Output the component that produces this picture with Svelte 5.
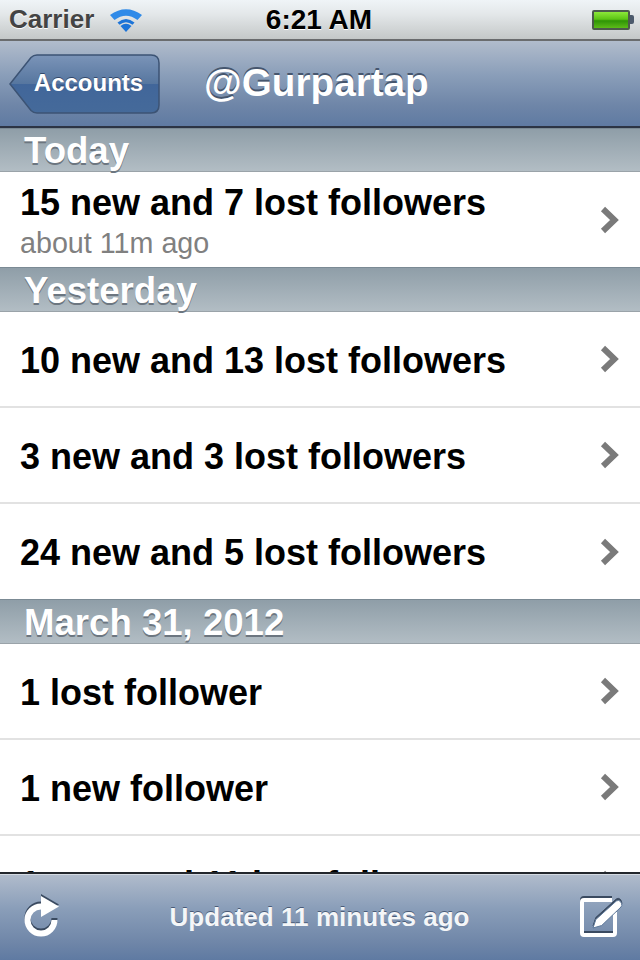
<script>
    const sections = [
        {
            title: "Today",
            rows: [{ text: "15 new and 7 lost followers", sub: "about 11m ago" }],
        },
        {
            title: "Yesterday",
            rows: [
                { text: "10 new and 13 lost followers" },
                { text: "3 new and 3 lost followers" },
                { text: "24 new and 5 lost followers" },
            ],
        },
        {
            title: "March 31, 2012",
            rows: [
                { text: "1 lost follower" },
                { text: "1 new follower" },
                { text: "1 new and 11 lost followers" },
            ],
        },
    ];
</script>

<div class="phone">
    <div class="status">
        <span class="carrier">Carrier</span>
        <svg class="wifi" width="34" height="26" viewBox="0 0 34 26">
            <path d="M17 25 L11.5 19 Q17 14.5 22.5 19 Z" fill="#1c74d8" />
            <path d="M8.5 15.5 Q17 8.5 25.5 15.5 L23.5 17.8 Q17 12.5 10.5 17.8 Z" fill="#1c74d8" />
            <path d="M1 8 Q17 -3.500 33 8 L28.500 13 Q17 4.500 5.500 13 Z" fill="#2f8ae8" />
        </svg>
        <span class="time">6:21 AM</span>
        <div class="battery">
            <div class="battery-fill"></div>
            <div class="battery-tip"></div>
        </div>
    </div>

    <div class="navbar">
        <div class="back">
            <svg class="back-shape" width="151" height="60" viewBox="0 0 151 60">
                <defs>
                    <linearGradient id="backGrad" x1="0" y1="0" x2="0" y2="1">
                        <stop offset="0" stop-color="#7b94b8" />
                        <stop offset="0.5" stop-color="#56769f" />
                        <stop offset="0.5" stop-color="#41669a" />
                        <stop offset="1" stop-color="#456a9a" />
                    </linearGradient>
                </defs>
                <path
                    d="M1 30 L22 3.5 Q24.5 1 28 1 L142 1 Q150 1 150 9 L150 51 Q150 59 142 59 L28 59 Q24.5 59 22 56.5 Z"
                    fill="url(#backGrad)"
                    stroke="#3c5374"
                    stroke-width="1.5"
                />
            </svg>
            <span class="back-label">Accounts</span>
        </div>
        <span class="nav-title">@Gurpartap</span>
    </div>

    <div class="list">
        {#each sections as section}
            <div class="section-head"><span>{section.title}</span></div>
            {#each section.rows as row, i}
                <div class="row" class:has-sub={row.sub} class:last={i === section.rows.length - 1}>
                    <div class="row-text">
                        <div class="row-title">{row.text}</div>
                        {#if row.sub}
                            <div class="row-sub">{row.sub}</div>
                        {/if}
                    </div>
                    <svg class="chevron" width="20" height="28" viewBox="0 0 20 28">
                        <path d="M3 3 L14.5 14 L3 25" fill="none" stroke="#7a7a7a" stroke-width="6" />
                    </svg>
                </div>
            {/each}
        {/each}
    </div>

    <div class="toolbar">
        <svg class="tool-icon" width="40" height="46" viewBox="0 0 40 46">
            <path d="M32.5 26 A13.5 13.5 0 1 1 19 12.5" fill="none" stroke="#fff" stroke-width="6" />
            <path d="M19 2 L37 12.5 L19 23 Z" fill="#fff" />
        </svg>
        <span class="updated">Updated 11 minutes ago</span>
        <svg class="tool-icon" width="44" height="44" viewBox="0 0 44 44">
            <path d="M32 5 H4 Q2 5 2 7 V38 Q2 40 4 40 H33 Q35 40 35 38 V17" fill="none" stroke="#fff" stroke-width="4" />
            <path d="M13 33 L15.800 24.500 L36.300 6 Q38.500 4.500 40.500 6.500 L41.500 8.500 Q42.500 10.500 41 12 L21.700 30.500 Z" fill="#fff" stroke="#5c7799" stroke-width="1" />
        </svg>
    </div>
</div>

<style>
    :global(body) {
        margin: 0;
        background: #fff;
    }

    .phone {
        width: 640px;
        height: 960px;
        display: flex;
        flex-direction: column;
        overflow: hidden;
        font-family: "Liberation Sans", Arial, sans-serif;
    }

    .status {
        height: 39px;
        flex: none;
        display: flex;
        align-items: center;
        padding: 0 6px 0 9px;
        position: relative;
        background: linear-gradient(#eff4f7, #e4e8ea 35%, #c4c8c8);
        border-bottom: 2px solid #6a6c6e;
    }

    .carrier {
        font-size: 26px;
        font-weight: bold;
        color: #444;
        text-shadow: 0 1px 0 #fff;
    }

    .wifi {
        margin-left: 15px;
    }

    .time {
        position: absolute;
        left: -2px;
        right: 0;
        text-align: center;
        font-size: 28px;
        font-weight: bold;
        color: #000;
        text-shadow: 0 1px 0 #fff;
    }

    .battery {
        margin-left: auto;
        display: flex;
        align-items: center;
    }

    .battery-fill {
        width: 34px;
        height: 16px;
        border: 2px solid #4c5a4c;
        border-radius: 2px;
        background: linear-gradient(#8ce83a, #5cc414 45%, #2f9406 55%, #5cbc18);
    }

    .battery-tip {
        width: 4px;
        height: 9px;
        background: #4c5a6c;
        border-radius: 0 2px 2px 0;
    }

    .navbar {
        height: 85px;
        flex: none;
        display: flex;
        align-items: center;
        padding-left: 9px;
        background: linear-gradient(#b1bccc, #8a9eb9 40%, #6f86a8 75%, #5f7aa2);
        border-bottom: 2px solid #2c3444;
    }

    .back {
        width: 151px;
        height: 60px;
        position: relative;
        display: flex;
        align-items: center;
        justify-content: center;
        flex: none;
    }

    .back-shape {
        position: absolute;
        left: 0;
        top: 0;
    }

    .back-label {
        position: relative;
        margin-left: 8px;
        margin-top: -2px;
        font-size: 24px;
        font-weight: bold;
        color: #fff;
        text-shadow: 0 -1px 0 #33486a;
    }

    .nav-title {
        margin-left: 44px;
        margin-top: -2px;
        font-size: 38.7px;
        font-weight: bold;
        color: #fff;
        text-shadow: 0 -2px 0 #46566e;
    }

    .list {
        flex: 1;
        min-height: 0;
        overflow: hidden;
        background: #fff;
    }

    .section-head {
        height: 45px;
        box-sizing: border-box;
        padding: 2px 0 0 24px;
        display: flex;
        align-items: center;
        background: linear-gradient(#8f9ea8, #b2bdc4);
        border-top: 1px solid #7b8a94;
        border-bottom: 1px solid #9aa3a9;
        font-size: 36.6px;
        font-weight: bold;
        color: #fff;
        text-shadow: 0 2px 0 #6c7680;
    }

    .section-head:first-child {
        height: 44px;
    }

    .row {
        height: 96px;
        box-sizing: border-box;
        padding: 0 20px;
        display: flex;
        align-items: center;
        justify-content: space-between;
        border-bottom: 2px solid #e2e2e2;
        background: #fff;
    }

    .row.last {
        height: 95px;
        border-bottom: none;
    }

    .row-text {
        padding-top: 4px;
    }

    .row.last .row-text {
        padding-top: 2px;
    }

    .row.has-sub .row-text {
        padding-top: 3px;
    }

    .row-title {
        font-size: 36px;
        font-weight: bold;
        color: #000;
    }

    .row-sub {
        font-size: 28.7px;
        color: #808080;
        margin-top: 3px;
    }

    .chevron {
        flex: none;
    }

    .toolbar {
        height: 86px;
        flex: none;
        display: flex;
        align-items: center;
        justify-content: space-between;
        padding: 0 16px 0 22px;
        background: linear-gradient(#b1bccc, #8a9eb9 40%, #6f86a8 80%, #5f7aa2);
        border-top: 2px solid #22262c;
        box-shadow: inset 0 1px 0 #d4dae2;
    }

    .updated {
        margin-left: -3px;
        margin-top: 1px;
        font-size: 26.1px;
        font-weight: bold;
        color: #f4f6f8;
        text-shadow: 0 -1px 0 #4a5c78;
    }

    .tool-icon {
        flex: none;
        filter: drop-shadow(0 -1.5px 0 #3a4a60);
    }
</style>
